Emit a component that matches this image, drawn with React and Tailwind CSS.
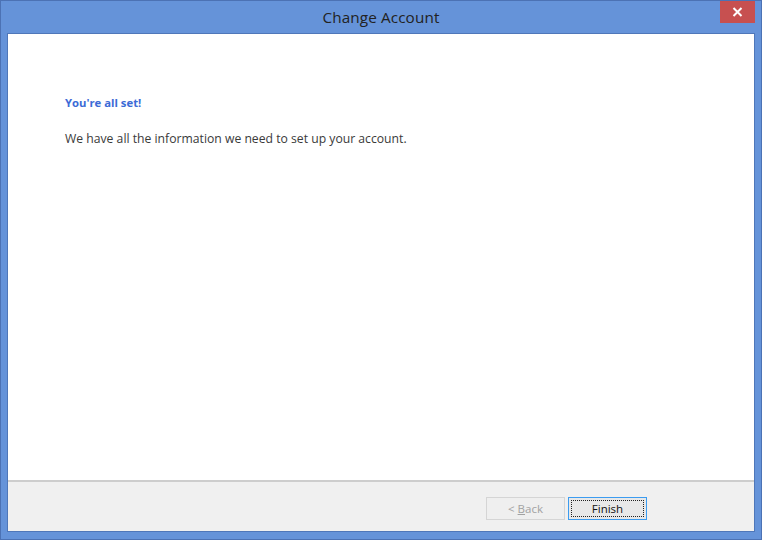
import React from "react";

const App = () => {
  return (
    <div className="w-[762px] h-[540px] bg-[#6593d9] border border-[#4c72b4] flex flex-col" style={{ fontFamily: '"Open Sans", "Noto Sans", sans-serif' }}>
      <div className="h-[32px] relative flex items-center justify-center">
        <span className="text-[15.3px] text-[#222] tracking-[0.1px]">Change Account</span>
        <div className="absolute right-[6px] top-0 w-[35px] h-[22px] bg-[#c75050] flex items-center justify-center">
          <svg width="11" height="10" viewBox="0 0 11 10">
            <path d="M1.5 1 L9.5 9 M9.5 1 L1.5 9" stroke="#fff" strokeWidth="2" />
          </svg>
        </div>
      </div>
      <div className="flex-1 mx-[6px] mb-[7px] border border-[#4f77b9] flex flex-col">
        <div className="flex-1 bg-white pl-[57px] pr-[56px] pt-[61px]">
          <div className="text-[11.3px] font-bold text-[#3c6bd6] leading-[16px]">You're all set!</div>
          <div className="text-[12.2px] text-[#3a3a3a] leading-[16px] mt-[20px]">We have all the information we need to set up your account.</div>
        </div>
        <div className="h-[51px] bg-[#f0f0f0] border-t-2 border-[#cdcdcd] flex items-start justify-end pt-[15px] pr-[107px] gap-[3px]">
          <button className="w-[79px] h-[23px] border border-[#d5d5d5] bg-[#efefef] text-[11.5px] text-[#a2a2a2]">
            &lt; <span className="underline">B</span>ack
          </button>
          <button className="w-[79px] h-[23px] border border-[#3c9cf0] bg-[#e8e8e8] p-[2px]">
            <div className="w-full h-full border border-dotted border-[#222] flex items-center justify-center text-[11.5px] text-[#111]">Finish</div>
          </button>
        </div>
      </div>
    </div>
  );
};

export default App;
